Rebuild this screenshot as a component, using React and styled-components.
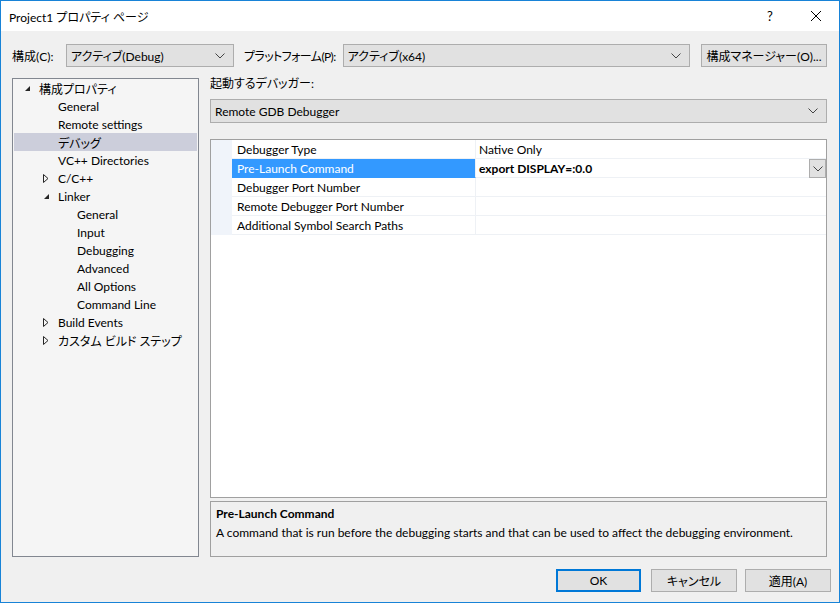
import React from "react";
import styled, { createGlobalStyle } from "styled-components";

const GlobalStyle = createGlobalStyle`
  html, body {
    margin: 0;
    padding: 0;
    background: #ffffff;
  }
  body {
    font-family: "Segoe UI", Lato, "Noto Sans CJK JP", sans-serif;
    font-size: 12px;
    font-feature-settings: "palt";
    color: #000;
  }
  * { box-sizing: border-box; }
`;

const Window = styled.div`
  width: 840px;
  height: 603px;
  border: 1px solid #1883d7;
  display: flex;
  flex-direction: column;
  background: #f0f0f0;
`;

const TitleBar = styled.div`
  height: 30px;
  background: #ffffff;
  display: flex;
  align-items: center;
  padding-left: 8px;
`;

const Title = styled.div`
  flex: 1;
  font-size: 12px;
`;

const TitleButton = styled.div`
  width: 46px;
  height: 30px;
  display: flex;
  align-items: center;
  justify-content: center;
  font-size: 13px;
`;

const Body = styled.div`
  flex: 1;
  display: flex;
  flex-direction: column;
  padding: 13px 12px 0 11px;
  min-height: 0;
`;

const Toolbar = styled.div`
  display: flex;
  align-items: center;
  height: 23px;
`;

const Label = styled.span`
  flex: none;
  min-width: ${(p) => p.$width}px;
  margin-right: ${(p) => p.$mr || 0}px;
  letter-spacing: ${(p) => (p.$tight ? "-0.6px" : "0")};
  white-space: nowrap;
`;

const Combo = styled.div`
  width: ${(p) => (p.$width ? `${p.$width}px` : "auto")};
  flex: ${(p) => (p.$width ? "none" : 1)};
  height: 23px;
  background: #e1e1e1;
  border: 1px solid #adadad;
  display: flex;
  align-items: center;
  padding: 0 8px 0 4px;
  margin-right: ${(p) => p.$mr || 0}px;
`;

const ComboText = styled.span`
  flex: 1;
  white-space: nowrap;
`;

const Button = styled.div`
  width: ${(p) => p.$width || 85}px;
  height: 23px;
  background: #e1e1e1;
  border: ${(p) => (p.$default ? "2px solid #0078d7" : "1px solid #adadad")};
  display: flex;
  align-items: center;
  justify-content: center;
  white-space: nowrap;
`;

const Main = styled.div`
  display: flex;
  gap: 11px;
  margin-top: 11px;
  height: 479px;
`;

const Tree = styled.div`
  width: 187px;
  background: #f5f5f5;
  border: 1px solid #828790;
  display: flex;
  flex-direction: column;
`;

const TreeRow = styled.div`
  height: 18px;
  display: flex;
  align-items: center;
  padding-left: ${(p) => 6 + p.$level * 19}px;
  background: ${(p) => (p.$selected ? "#cccedb" : "transparent")};
  margin: 0 1px;
  white-space: nowrap;
`;

const ArrowSlot = styled.span`
  width: 19px;
  height: 18px;
  display: flex;
  align-items: center;
  padding-left: 4px;
`;

const Right = styled.div`
  flex: 1;
  display: flex;
  flex-direction: column;
`;

const SectionLabel = styled.div`
  height: 14px;
  line-height: 14px;
  margin-top: -1px;
  margin-bottom: 8px;
`;

const Grid = styled.div`
  margin-top: 16px;
  height: 359px;
  background: #ffffff;
  border: 1px solid #a0a0a0;
`;

const GridRow = styled.div`
  display: flex;
  height: 19px;
`;

const Margin = styled.div`
  width: 21px;
  background: #f0f4fa;
`;

const NameCell = styled.div`
  width: 244px;
  padding-left: 5px;
  display: flex;
  align-items: center;
  background: ${(p) => (p.$selected ? "#3399ff" : "#ffffff")};
  color: ${(p) => (p.$selected ? "#ffffff" : "#000")};
  border-bottom: 1px solid ${(p) => (p.$selected ? "#3399ff" : "#eef1f5")};
  border-right: 1px solid #eef1f5;
  white-space: nowrap;
`;

const ValueCell = styled.div`
  flex: 1;
  padding-left: 3px;
  display: flex;
  align-items: center;
  border-bottom: 1px solid #eef1f5;
  font-weight: ${(p) => (p.$bold ? 700 : 400)};
  white-space: nowrap;
`;

const DropButton = styled.div`
  margin-left: auto;
  width: 17px;
  height: 19px;
  margin-top: 1px;
  background: #e1e1e1;
  border: 1px solid #adadad;
  display: flex;
  align-items: center;
  justify-content: center;
`;

const Description = styled.div`
  margin-top: 3px;
  height: 56px;
  border: 1px solid #a0a0a0;
  background: #f0f0f0;
  padding: 2px 5px;
  line-height: 19px;
  white-space: nowrap;
`;

const DescTitle = styled.div`
  font-weight: 700;
`;

const Footer = styled.div`
  display: flex;
  justify-content: flex-end;
  margin-top: 12px;
  margin-right: -4px;
`;

const FooterButton = styled(Button)`
  margin-left: ${(p) => p.$ml || 0}px;
`;

const Chevron = () => (
  <svg width="10" height="6" viewBox="0 0 10 6">
    <path d="M0.5 0.5 L5 5 L9.5 0.5" fill="none" stroke="#444" strokeWidth="1" />
  </svg>
);

const OpenArrow = () => (
  <svg width="7" height="7" viewBox="0 0 7 7">
    <path d="M6 1 L6 6 L1 6 Z" fill="#262626" />
  </svg>
);

const ClosedArrow = () => (
  <svg width="6" height="9" viewBox="0 0 6 9">
    <path d="M0.5 0.5 L5 4.5 L0.5 8.5 Z" fill="none" stroke="#262626" strokeWidth="1" />
  </svg>
);

const CloseIcon = () => (
  <svg width="10" height="10" viewBox="0 0 10 10">
    <path d="M0 0 L10 10 M10 0 L0 10" stroke="#000" strokeWidth="1" />
  </svg>
);

const tree = [
  { label: "構成プロパティ", level: 0, arrow: "open" },
  { label: "General", level: 1 },
  { label: "Remote settings", level: 1 },
  { label: "デバッグ", level: 1, selected: true },
  { label: "VC++ Directories", level: 1 },
  { label: "C/C++", level: 1, arrow: "closed" },
  { label: "Linker", level: 1, arrow: "open" },
  { label: "General", level: 2 },
  { label: "Input", level: 2 },
  { label: "Debugging", level: 2 },
  { label: "Advanced", level: 2 },
  { label: "All Options", level: 2 },
  { label: "Command Line", level: 2 },
  { label: "Build Events", level: 1, arrow: "closed" },
  { label: "カスタム ビルド ステップ", level: 1, arrow: "closed" },
];

const props = [
  { name: "Debugger Type", value: "Native Only" },
  { name: "Pre-Launch Command", value: "export DISPLAY=:0.0", selected: true },
  { name: "Debugger Port Number", value: "" },
  { name: "Remote Debugger Port Number", value: "" },
  { name: "Additional Symbol Search Paths", value: "" },
];

const App = () => {
  return (
    <>
      <GlobalStyle />
      <Window>
        <TitleBar>
          <Title>Project1 プロパティ ページ</Title>
          <TitleButton>?</TitleButton>
          <TitleButton>
            <CloseIcon />
          </TitleButton>
        </TitleBar>
        <Body>
          <Toolbar>
            <Label $width={54}>構成(C):</Label>
            <Combo $width={168} $mr={10}>
              <ComboText>アクティブ(Debug)</ComboText>
              <Chevron />
            </Combo>
            <Label $width={88} $mr={7} $tight>
              プラットフォーム(P):
            </Label>
            <Combo $mr={11}>
              <ComboText>アクティブ(x64)</ComboText>
              <Chevron />
            </Combo>
            <Button $width={126}>構成マネージャー(O)...</Button>
          </Toolbar>
          <Main>
            <Tree>
              {tree.map((item, i) => (
                <TreeRow key={i} $level={item.level} $selected={item.selected}>
                  <ArrowSlot>
                    {item.arrow === "open" && <OpenArrow />}
                    {item.arrow === "closed" && <ClosedArrow />}
                  </ArrowSlot>
                  {item.label}
                </TreeRow>
              ))}
            </Tree>
            <Right>
              <SectionLabel>起動するデバッガー:</SectionLabel>
              <Combo>
                <ComboText>Remote GDB Debugger</ComboText>
                <Chevron />
              </Combo>
              <Grid>
                {props.map((p) => (
                  <GridRow key={p.name}>
                    <Margin />
                    <NameCell $selected={p.selected}>{p.name}</NameCell>
                    <ValueCell $bold={p.selected}>
                      {p.value}
                      {p.selected && (
                        <DropButton>
                          <Chevron />
                        </DropButton>
                      )}
                    </ValueCell>
                  </GridRow>
                ))}
              </Grid>
              <Description>
                <DescTitle>Pre-Launch Command</DescTitle>
                <div>
                  A command that is run before the debugging starts and that can be used to affect the
                  debugging environment.
                </div>
              </Description>
            </Right>
          </Main>
          <Footer>
            <FooterButton $default $width={85}>OK</FooterButton>
            <FooterButton $width={86} $ml={10}>キャンセル</FooterButton>
            <FooterButton $width={86} $ml={8}>適用(A)</FooterButton>
          </Footer>
        </Body>
      </Window>
    </>
  );
};

export default App;
